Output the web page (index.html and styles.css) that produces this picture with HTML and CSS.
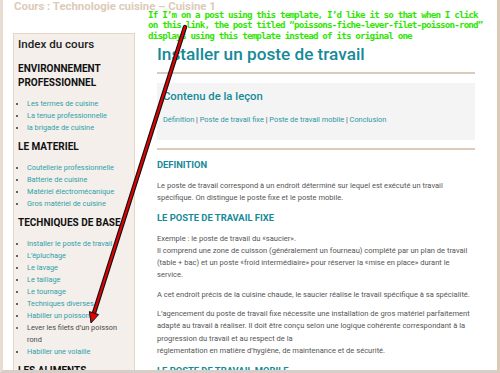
FILE: index.html
```html
<!DOCTYPE html>
<html lang="fr">
<head>
<meta charset="utf-8">
<title>Installer un poste de travail</title>
<link rel="stylesheet" href="styles.css">
</head>
<body>
<div class="frame">
  <div class="course-title">Cours : Technologie cuisine – Cuisine 1</div>
  <div class="layout">
    <aside class="sidebar">
      <h3 class="index-title">Index du cours</h3>
      <h4 class="cat">ENVIRONNEMENT PROFESSIONNEL</h4>
      <ul class="toc">
        <li><a href="#">Les termes de cuisine</a></li>
        <li><a href="#">La tenue professionnelle</a></li>
        <li><a href="#">la brigade de cuisine</a></li>
      </ul>
      <h4 class="cat">LE MATERIEL</h4>
      <ul class="toc">
        <li><a href="#">Coutellerie professionnelle</a></li>
        <li><a href="#">Batterie de cuisine</a></li>
        <li><a href="#">Matériel électromécanique</a></li>
        <li><a href="#">Gros matériel de cuisine</a></li>
      </ul>
      <h4 class="cat">TECHNIQUES DE BASE</h4>
      <ul class="toc">
        <li><a href="#">Installer le poste de travail</a></li>
        <li><a href="#">L’épluchage</a></li>
        <li><a href="#">Le lavage</a></li>
        <li><a href="#">Le taillage</a></li>
        <li><a href="#">Le tournage</a></li>
        <li><a href="#">Techniques diverses</a></li>
        <li><a href="#">Habiller un poisson</a></li>
        <li class="current">Lever les filets d’un poisson rond</li>
        <li><a href="#">Habiller une volaille</a></li>
      </ul>
      <h4 class="cat">LES ALIMENTS</h4>
    </aside>
    <main class="content">
      <h1 class="page-title">Installer un poste de travail</h1>
      <hr class="rule rule-top">
      <div class="lesson-box">
        <div class="lesson-title">Contenu de la leçon</div>
        <div class="lesson-links"><a href="#">Définition</a> | <a href="#">Poste de travail fixe</a> | <a href="#">Poste de travail mobile</a> | <a href="#">Conclusion</a></div>
      </div>
      <hr class="rule">
      <h2 class="sec">DEFINITION</h2>
      <p>Le poste de travail correspond à un endroit déterminé sur lequel est exécuté un travail spécifique. On distingue le poste fixe et le poste mobile.</p>
      <h2 class="sec">LE POSTE DE TRAVAIL FIXE</h2>
      <p>Exemple : le poste de travail du «saucier».<br>Il comprend une zone de cuisson (généralement un fourneau) complété par un plan de travail (table + bac) et un poste «froid intermédiaire» pour réserver la «mise en place» durant le service.</p>
      <p>A cet endroit précis de la cuisine chaude, le saucier réalise le travail spécifique à sa spécialité.</p>
      <p>L’agencement du poste de travail fixe nécessite une installation de gros matériel parfaitement adapté au travail à réaliser. Il doit être conçu selon une logique cohérente correspondant à la progression du travail et au respect de la<br>réglementation en matière d’hygiène, de maintenance et de sécurité.</p>
      <h2 class="sec">LE POSTE DE TRAVAIL MOBILE</h2>
    </main>
  </div>
  <div class="note">If I’m on a post using this template, I’d like it so that when I click<br>on this link, the post titled “poissons-fiche-lever-filet-poisson-rond”<br>displays using this template instead of its original one</div>
  <svg class="arrow" width="500" height="373" viewBox="0 0 500 373" aria-hidden="true">
    <line x1="185" y1="27" x2="94" y2="313" stroke="#111" stroke-width="4.4" stroke-linecap="round"/>
    <line x1="185" y1="27" x2="94" y2="313" stroke="#e30000" stroke-width="2.2" stroke-linecap="round"/>
    <polygon points="91,323 98.6,314.6 89.4,311.6" fill="#e30000" stroke="#111" stroke-width="1" stroke-linejoin="round"/>
  </svg>
</div>
</body>
</html>
```
FILE: styles.css
```css
* { box-sizing: border-box; }
html, body { margin: 0; padding: 0; background: #fff; }
body { font-family: Roboto, "Open Sans", Arial, sans-serif; }

.frame {
  position: relative;
  width: 500px;
  height: 373px;
  overflow: hidden;
  border-left: 3px solid #e9ddd1;
  border-right: 3px solid #dccab9;
  border-bottom: 3px solid #d7cfc7;
  padding-left: 10px;
}

.course-title {
  font-weight: 700;
  font-size: 11.4px;
  line-height: 12px;
  color: #dccbb9;
  margin: 0 0 21px 1px;
}

.layout {
  display: grid;
  grid-template-columns: 122px 318px;
  column-gap: 22px;
  align-items: start;
}

/* Sidebar */
.sidebar {
  background: #f4efeb;
  border: 1px solid #e7d5c4;
  padding: 3px 5px 10px 4px;
}
.index-title {
  margin: 0;
  font-size: 11.6px;
  font-weight: 500;
  line-height: 14px;
  color: #222;
}
.cat {
  margin: 6px 0 8px;
  font-size: 10px;
  font-weight: 700;
  line-height: 14px;
  color: #111;
}
.index-title + .cat { margin-top: 11px; }
.toc {
  margin: 0;
  padding: 0 0 0 9px;
  list-style: disc;
  font-size: 7.35px;
  line-height: 12px;
  color: #333;
}
.toc a { color: #2f9fa8; text-decoration: none; }
.toc .current { color: #4a4a4a; }

/* Main */
.content { padding-top: 11px; }
.page-title {
  margin: 0;
  font-size: 17.2px;
  font-weight: 500;
  line-height: 21px;
  color: #168a98;
}
.rule {
  border: 0;
  height: 2px;
  background: #dccbbb;
  margin: 8px 0;
}
.rule-top { margin: 7px 0 9px; }
.lesson-box {
  background: #f4f4f4;
  padding: 6px 6px 14px;
}
.lesson-title {
  font-size: 11.3px;
  font-weight: 500;
  line-height: 16px;
  color: #168a98;
}
.lesson-links {
  margin-top: 9px;
  font-size: 7.4px;
  line-height: 12px;
  color: #444;
}
.lesson-links a { color: #2a97a3; text-decoration: none; }

.sec {
  margin: 0 0 7.5px;
  font-size: 9.4px;
  font-weight: 700;
  line-height: 14px;
  color: #168a98;
}
.content p {
  margin: 0 0 7px;
  max-width: 315px;
  font-size: 7.55px;
  line-height: 12.3px;
  color: #555;
}

/* Overlay annotation */
.note {
  position: absolute;
  left: 145px;
  top: 10px;
  font-family: "DejaVu Sans Mono", "Liberation Mono", monospace;
  font-weight: 700;
  font-size: 9.2px;
  letter-spacing: -0.82px;
  line-height: 10.3px;
  color: #2ee600;
  white-space: nowrap;
}
.arrow {
  position: absolute;
  left: -3px;
  top: 0;
}
```
